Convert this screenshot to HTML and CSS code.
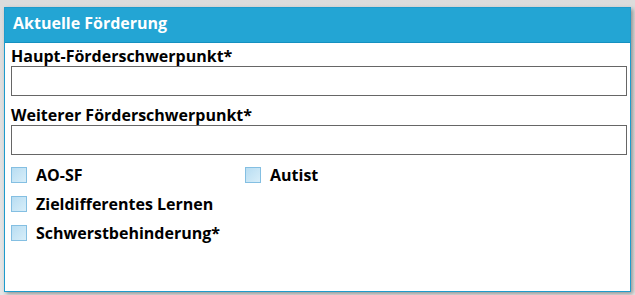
FILE: index.html
```html
<!DOCTYPE html>
<html lang="de">
<head>
    <meta charset="UTF-8">
    <title>Aktuelle Förderung</title>
    <link rel="stylesheet" href="styles.css">
</head>
<body>
    <!-- Panel: current support -->
    <div class="panel">
        <div class="panel-head">Aktuelle Förderung</div>
        <div class="panel-body">
            <label class="field-label">Haupt-Förderschwerpunkt*</label>
            <div class="field-input"></div>

            <label class="field-label second">Weiterer Förderschwerpunkt*</label>
            <div class="field-input"></div>

            <div class="checks">
                <div class="check"><span class="box"></span>AO-SF</div>
                <div class="check"><span class="box"></span>Autist</div>
                <div class="check"><span class="box"></span>Zieldifferentes Lernen</div>
                <div class="check"></div>
                <div class="check"><span class="box"></span>Schwerstbehinderung*</div>
            </div>
        </div>
    </div>
</body>
</html>
```

FILE: styles.css
```css
/* Page */
body {
    margin: 0;
    height: 295px;
    background: linear-gradient(#dcdcdc, #e6e6e6);
    font-family: 'Open Sans', 'Noto Sans', Arial, sans-serif;
    overflow: hidden;
}

.panel {
    margin: 7px 0 0 4px;
    width: 625px;
    height: 283px;
    background: #fff;
    border: 1px solid #1e9bcc;
    box-shadow: 2px 2px 4px rgba(0, 0, 0, .35);
}

.panel-head {
    height: 34px;
    line-height: 31px;
    padding-left: 8px;
    background: #23a5d4;
    border-bottom: 1px solid #1590c0;
    color: #fff;
    font-size: 16px;
    font-weight: 700;
}

.panel-body {
    padding: 3px 3px 0 6px;
}

.field-label {
    display: block;
    font-size: 16px;
    font-weight: 700;
    line-height: 20px;
    color: #000;
}

.field-label.second {
    margin-top: 9px;
}

.field-input {
    height: 28px;
    border: 1px solid #666;
}

.checks {
    display: grid;
    grid-template-columns: 234px 1fr;
    row-gap: 8px;
    margin-top: 9px;
}

.check {
    display: flex;
    align-items: center;
    height: 21px;
    font-size: 16px;
    font-weight: 700;
    color: #000;
}

.check .box {
    width: 14px;
    height: 14px;
    margin-right: 9px;
    border: 1px solid #84bfe2;
    background: linear-gradient(135deg, #b8ddf2, #d8eef9);
}
```
